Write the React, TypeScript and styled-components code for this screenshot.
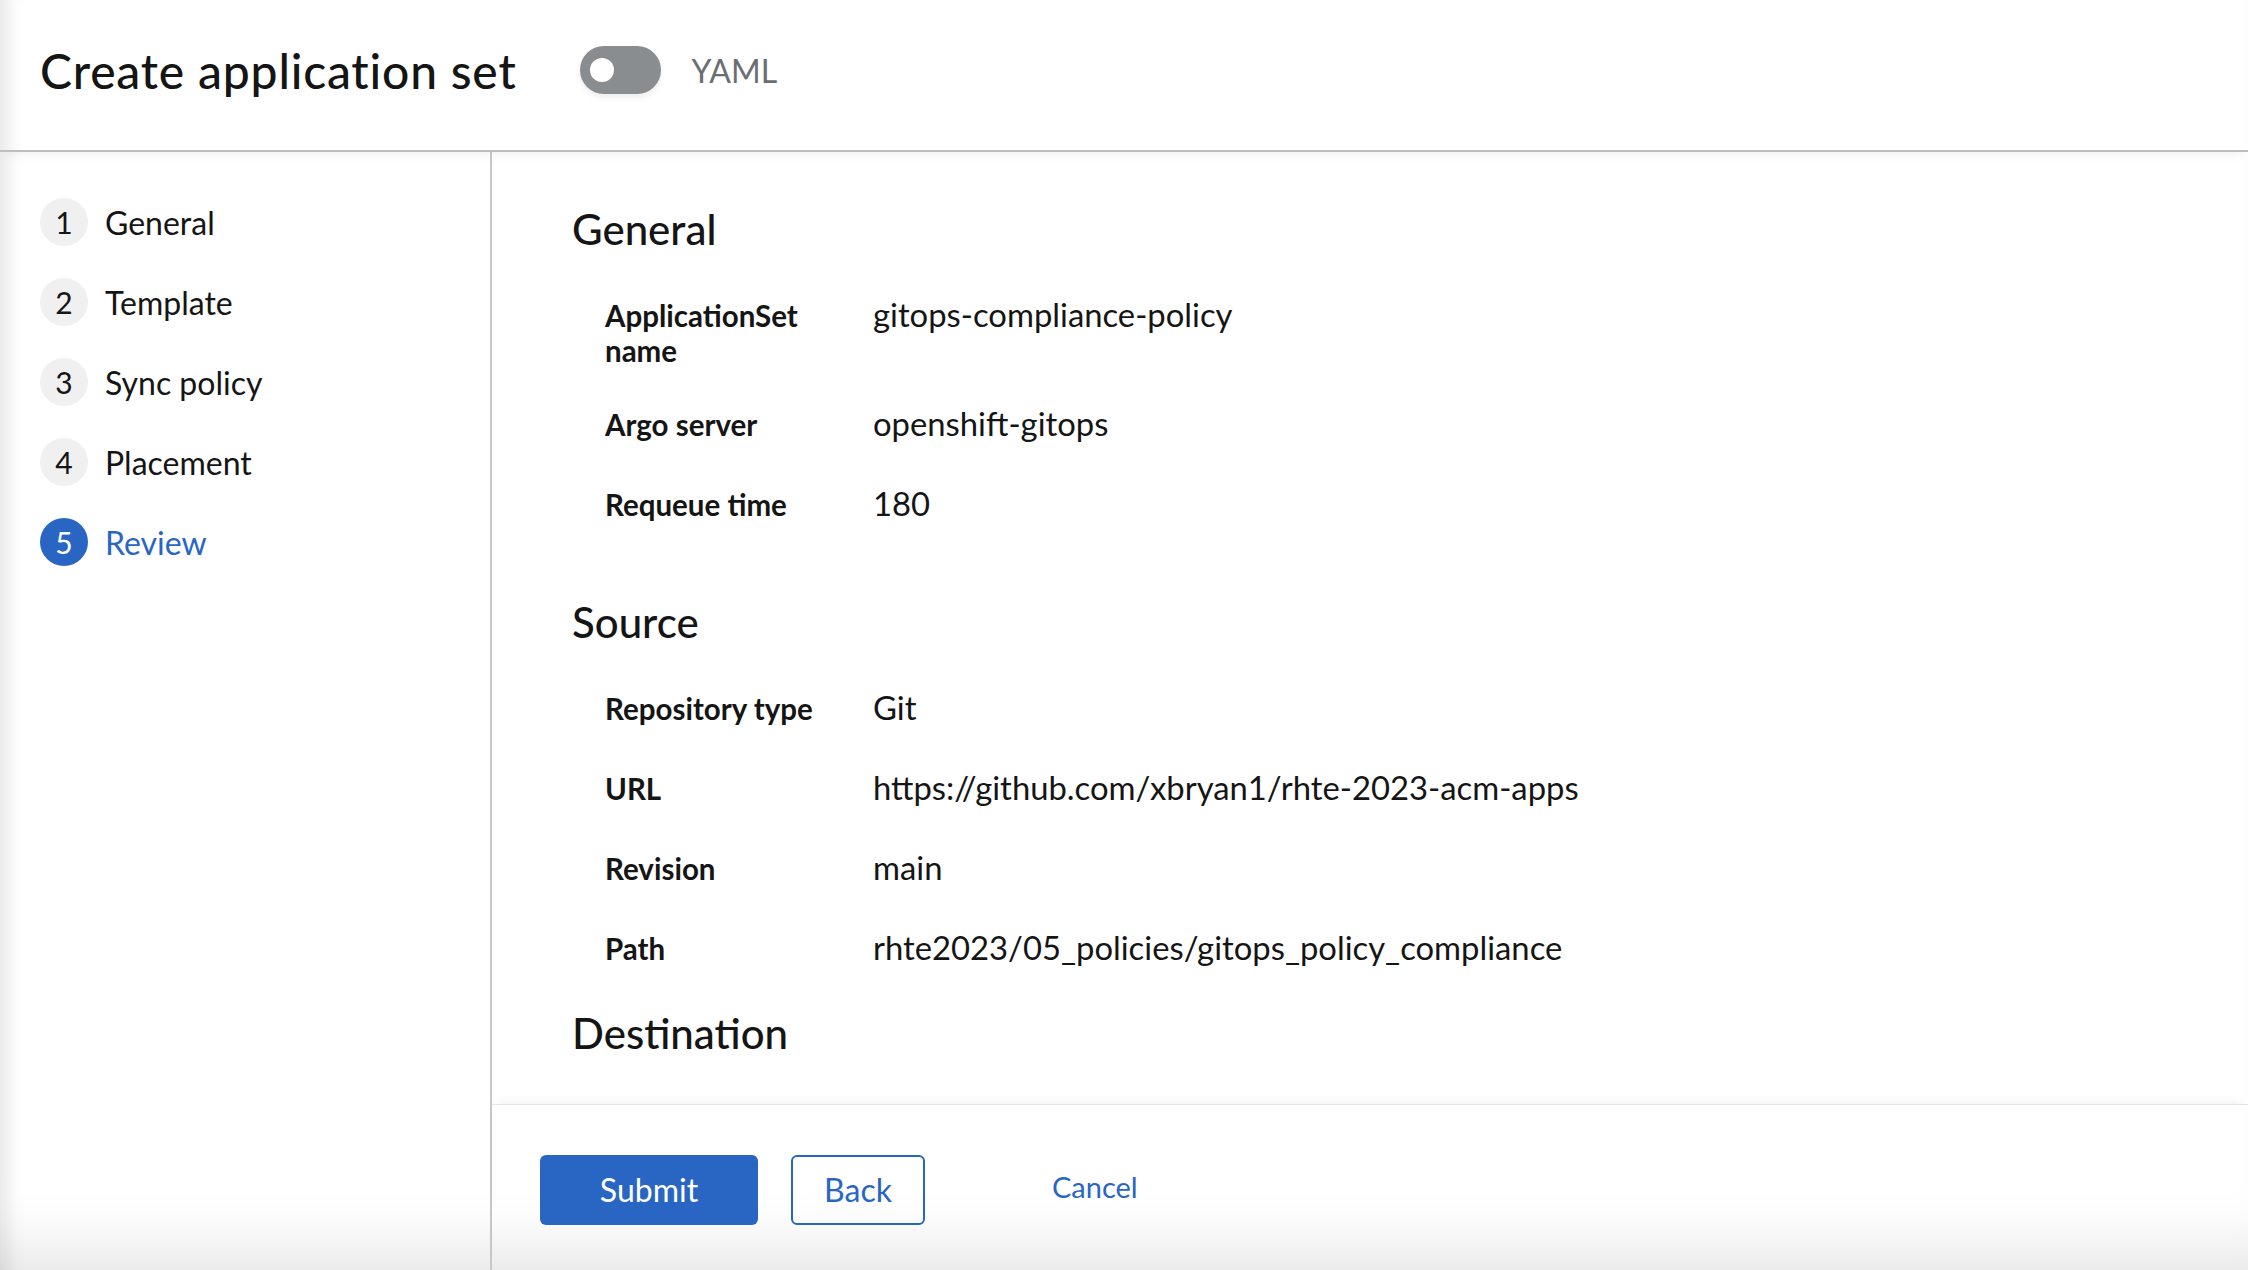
import React from "react";
import styled, { createGlobalStyle } from "styled-components";

const GlobalStyle = createGlobalStyle`
  html, body { margin: 0; padding: 0; background: #ffffff; }
  body { font-family: Lato, "Open Sans", sans-serif; color: #151515; }
  * { box-sizing: border-box; }
`;

const Page = styled.div`
  width: 100vw;
  height: 100vh;
  display: flex;
  flex-direction: column;
  background: #ffffff;
  box-shadow: inset 22px 0 18px -14px rgba(0, 0, 0, 0.09),
    inset 0 -70px 60px -48px rgba(0, 0, 0, 0.1);
  overflow: hidden;
`;

const Header = styled.header`
  height: 152px;
  flex: none;
  display: flex;
  align-items: center;
  padding: 0 0 10px 40px;
  border-bottom: 2px solid #bdbdbd;
  box-shadow: 0 6px 10px -4px rgba(0, 0, 0, 0.06);
  position: relative;
  z-index: 1;
`;

const Title = styled.h1`
  margin: 0;
  font-size: 48px;
  font-weight: 500;
  letter-spacing: 0.8px;
  color: #151515;
`;

const Toggle = styled.div`
  margin-left: 63px;
  width: 81px;
  height: 48px;
  border-radius: 24px;
  background: #8a8d90;
  display: flex;
  align-items: center;
  padding-left: 10px;
  box-shadow: 0 3px 6px rgba(0, 0, 0, 0.08);
`;

const Knob = styled.span`
  width: 24px;
  height: 24px;
  border-radius: 50%;
  background: #ffffff;
`;

const ToggleLabel = styled.span`
  margin-left: 31px;
  font-size: 32px;
  color: #6a6e73;
`;

const Body = styled.div`
  flex: 1;
  min-height: 0;
  display: grid;
  grid-template-columns: 492px 1fr;
`;

const Nav = styled.nav`
  border-right: 2px solid #c8c8c8;
  padding-top: 30px;
  display: flex;
  flex-direction: column;
`;

const StepItem = styled.div`
  height: 80px;
  display: flex;
  align-items: center;
  padding-left: 40px;
  gap: 17px;
`;

const StepNum = styled.span<{ $active?: boolean }>`
  width: 48px;
  height: 48px;
  border-radius: 50%;
  flex: none;
  display: flex;
  align-items: center;
  justify-content: center;
  font-size: 30px;
  background: ${(p) => (p.$active ? "#2966c4" : "#f0f0f0")};
  color: ${(p) => (p.$active ? "#ffffff" : "#151515")};
`;

const StepText = styled.span<{ $active?: boolean }>`
  font-size: 32px;
  color: ${(p) => (p.$active ? "#2966c4" : "#151515")};
`;

const Main = styled.main`
  display: flex;
  flex-direction: column;
  min-height: 0;
`;

const Content = styled.div`
  flex: 1;
  min-height: 0;
  overflow: hidden;
  padding: 51px 80px 0 80px;
`;

const Section = styled.section<{ $top: number }>`
  margin-top: ${(p) => p.$top}px;
`;

const Heading = styled.h2`
  margin: 0;
  font-size: 42px;
  line-height: 52px;
  font-weight: 500;
  color: #151515;
`;

const List = styled.dl`
  margin: 36px 0 0 33px;
  display: flex;
  flex-direction: column;
  gap: 32px;
`;

const Row = styled.div`
  display: grid;
  grid-template-columns: 240px 1fr;
  column-gap: 28px;
  align-items: baseline;
`;

const Term = styled.dt`
  font-size: 29.5px;
  line-height: 35px;
  font-weight: 700;
  color: #151515;
`;

const Desc = styled.dd`
  margin: 0;
  font-size: 32.8px;
  line-height: 48px;
  color: #151515;
`;

const Footer = styled.footer`
  flex: none;
  height: 166px;
  border-top: 1px solid #e4e4e4;
  box-shadow: 0 -6px 10px -6px rgba(0, 0, 0, 0.08);
  display: flex;
  align-items: center;
  padding: 4px 0 0 48px;
  gap: 33px;
`;

const Button = styled.button<{ $variant: "primary" | "secondary" }>`
  height: 70px;
  width: ${(p) => (p.$variant === "primary" ? 218 : 134)}px;
  border-radius: 6px;
  font-family: inherit;
  font-size: 32px;
  cursor: pointer;
  background: ${(p) => (p.$variant === "primary" ? "#2966c4" : "transparent")};
  color: ${(p) => (p.$variant === "primary" ? "#ffffff" : "#2966c4")};
  border: 2px solid ${(p) => (p.$variant === "primary" ? "transparent" : "#2966c4")};
`;

const LinkButton = styled.button`
  margin-left: 94px;
  margin-bottom: 6px;
  background: none;
  border: none;
  padding: 0;
  font-family: inherit;
  font-size: 29px;
  color: #2966c4;
  cursor: pointer;
`;

const steps = ["General", "Template", "Sync policy", "Placement", "Review"];

const sections: { title: string; top: number; rows: [string, string][] }[] = [
  {
    title: "General",
    top: 0,
    rows: [
      ["ApplicationSet name", "gitops-compliance-policy"],
      ["Argo server", "openshift-gitops"],
      ["Requeue time", "180"],
    ],
  },
  {
    title: "Source",
    top: 68,
    rows: [
      ["Repository type", "Git"],
      ["URL", "https://github.com/xbryan1/rhte-2023-acm-apps"],
      ["Revision", "main"],
      ["Path", "rhte2023/05_policies/gitops_policy_compliance"],
    ],
  },
  { title: "Destination", top: 35, rows: [] },
];

export default function App() {
  return (
    <>
      <GlobalStyle />
      <Page>
        <Header>
          <Title>Create application set</Title>
          <Toggle>
            <Knob />
          </Toggle>
          <ToggleLabel>YAML</ToggleLabel>
        </Header>
        <Body>
          <Nav>
            {steps.map((s, i) => {
              const active = i === steps.length - 1;
              return (
                <StepItem key={s}>
                  <StepNum $active={active}>{i + 1}</StepNum>
                  <StepText $active={active}>{s}</StepText>
                </StepItem>
              );
            })}
          </Nav>
          <Main>
            <Content>
              {sections.map((sec) => (
                <Section key={sec.title} $top={sec.top}>
                  <Heading>{sec.title}</Heading>
                  {sec.rows.length > 0 && (
                    <List>
                      {sec.rows.map(([k, v]) => (
                        <Row key={k}>
                          <Term>{k}</Term>
                          <Desc>{v}</Desc>
                        </Row>
                      ))}
                    </List>
                  )}
                </Section>
              ))}
            </Content>
            <Footer>
              <Button $variant="primary">Submit</Button>
              <Button $variant="secondary">Back</Button>
              <LinkButton>Cancel</LinkButton>
            </Footer>
          </Main>
        </Body>
      </Page>
    </>
  );
}
